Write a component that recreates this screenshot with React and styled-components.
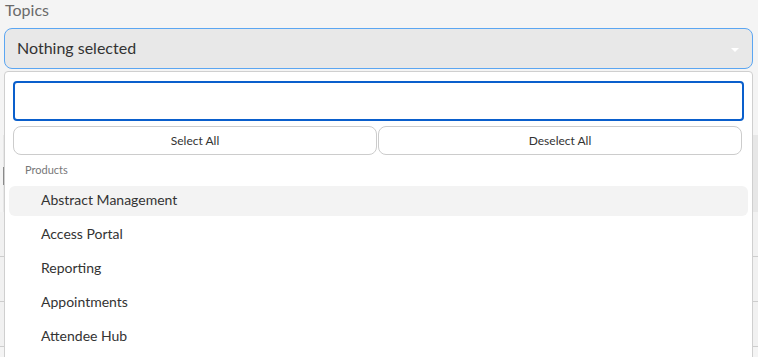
import React from 'react'
import styled, { createGlobalStyle } from 'styled-components'

const GlobalStyle = createGlobalStyle`
  html, body {
    margin: 0;
    padding: 0;
    background: #f4f4f4;
    font-family: Lato, "Open Sans", sans-serif;
    color: #333;
    overflow: hidden;
  }
  * { box-sizing: border-box; }
`

const Page = styled.div`
  width: 758px;
  height: 357px;
  overflow: hidden;
`

const Field = styled.div`
  margin: 0 5px 0 4px;
`

const Label = styled.div`
  font-size: 16px;
  line-height: 20px;
  color: #6a6a6a;
  padding-left: 1px;
  margin-bottom: 8px;
`

const SelectWrap = styled.div`
  position: relative;
`

const SelectButton = styled.div`
  height: 41px;
  display: flex;
  align-items: center;
  justify-content: space-between;
  padding: 0 13px 3px 12px;
  background: #e8e8e8;
  border: 1px solid #5ba6f2;
  border-radius: 8px;
  font-size: 16px;
  color: #333;
`

const Caret = styled.span`
  width: 0;
  height: 0;
  border-left: 4px solid transparent;
  border-right: 4px solid transparent;
  border-top: 4px solid #ffffff;
  margin-top: 5px;
`

const Menu = styled.div`
  position: absolute;
  top: 43px;
  left: 0;
  right: 0;
  background: #fff;
  border: 1px solid #cfcfcf;
  border-radius: 4px;
  padding: 9px 4px 0;
  height: 320px;
  z-index: 2;
`

const SearchArea = styled.div`
  padding: 0 4px;
`

const Search = styled.input`
  display: block;
  width: 100%;
  height: 40px;
  border: 2px solid #0a5fcc;
  border-radius: 4px;
  outline: none;
  background: #fff;
`

const Actions = styled.div`
  display: grid;
  grid-template-columns: 1fr 1fr;
  gap: 1px;
  margin-top: 5px;
  padding-right: 2px;
`

const ActionButton = styled.button`
  height: 29px;
  background: #fff;
  border: 1px solid #cccccc;
  border-radius: 8px;
  font-family: inherit;
  font-size: 12px;
  color: #333;
  padding: 0;
`

const GroupHeader = styled.div`
  height: 28px;
  display: flex;
  align-items: center;
  padding-left: 16px;
  font-size: 11px;
  color: #777;
  margin-bottom: 3px;
`

const Item = styled.div`
  height: 30px;
  margin-bottom: 4px;
  display: flex;
  align-items: center;
  padding: 0 0 3px 32px;
  border-radius: 6px;
  font-size: 14px;
  color: #333;
  background: ${p => (p.$active ? '#f3f3f3' : 'transparent')};
`

const Behind = styled.div`
  margin-top: 66px;
`

const BehindBox = styled.div`
  height: 77px;
  margin-left: 3px;
  padding-top: 32px;
  background: #e7e7e7;
`

const Notch = styled.div`
  width: 1px;
  height: 18px;
  background: #8a8a8a;
`

const BehindRow = styled.div`
  height: 45px;
  background: #f1f1f1;
  border-bottom: 1px solid #cdcdcd;
`

const products = ['Abstract Management', 'Access Portal', 'Reporting', 'Appointments', 'Attendee Hub']

export default function App() {
  return (
    <Page>
      <GlobalStyle />
      <Field>
        <Label>Topics</Label>
        <SelectWrap>
          <SelectButton>
            <span>Nothing selected</span>
            <Caret />
          </SelectButton>
          <Menu>
            <SearchArea>
              <Search type="text" />
              <Actions>
                <ActionButton>Select All</ActionButton>
                <ActionButton>Deselect All</ActionButton>
              </Actions>
            </SearchArea>
            <GroupHeader>Products</GroupHeader>
            {products.map((p, i) => (
              <Item key={p} $active={i === 0}>{p}</Item>
            ))}
          </Menu>
        </SelectWrap>
      </Field>
      <Behind>
        <BehindBox>
          <Notch />
        </BehindBox>
        <BehindRow />
        <BehindRow />
        <BehindRow />
      </Behind>
    </Page>
  )
}
